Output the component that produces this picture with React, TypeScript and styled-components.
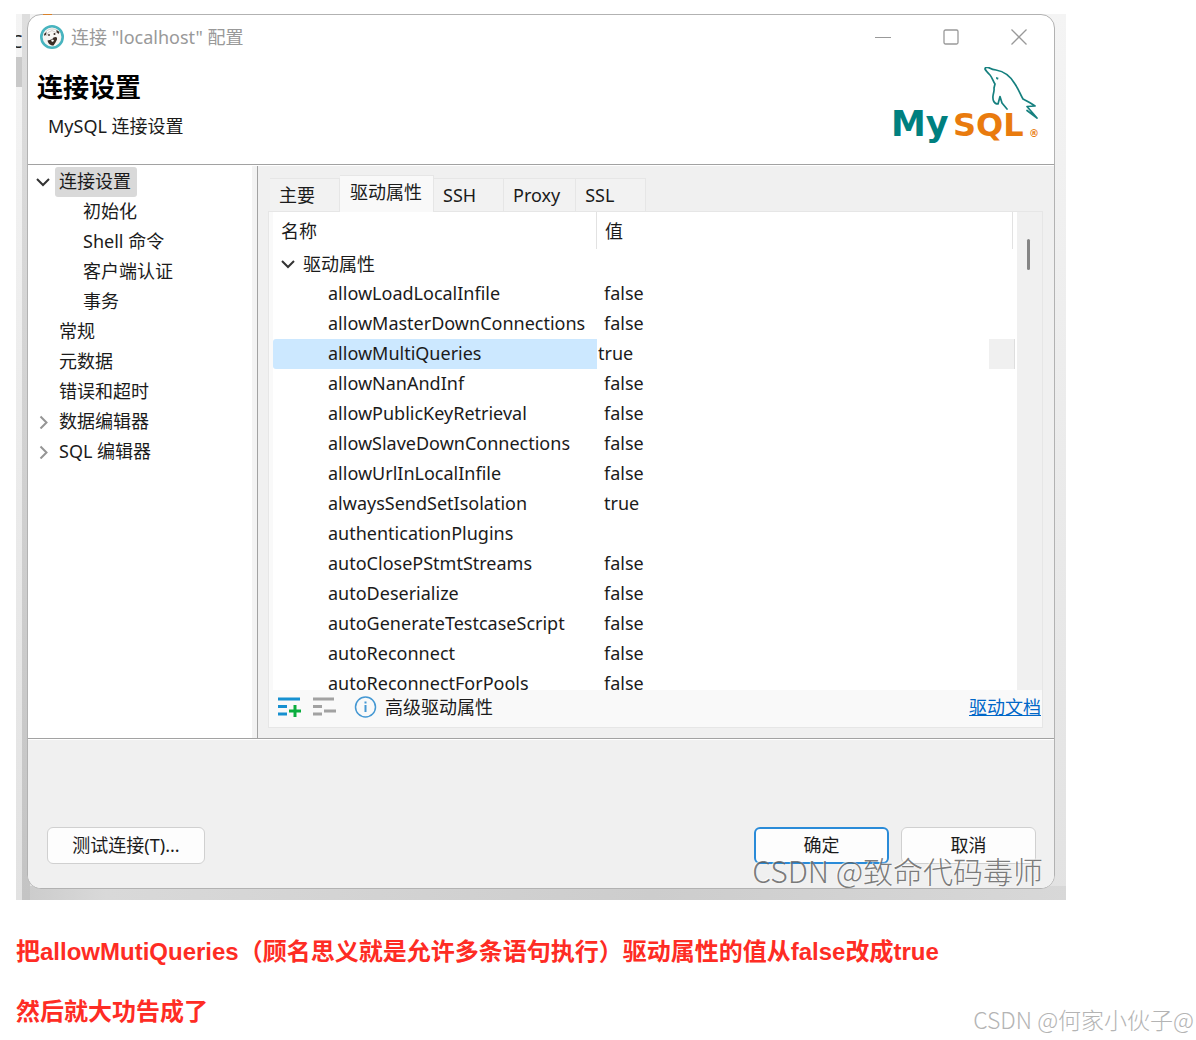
import React from 'react';
import styled, { createGlobalStyle } from 'styled-components';

const uiFont = '"Noto Sans", "Noto Sans CJK SC", sans-serif';

const GlobalStyle = createGlobalStyle`
  * { box-sizing: border-box; }
  body { margin: 0; background: #fff; }
  button, input { font: inherit; color: inherit; }
`;

const Page = styled.main`
  position: relative;
  padding: 14px 16px 0;
  min-height: 100vh;
  overflow: hidden;
`;

const Desktop = styled.figure`
  position: relative;
  margin: 0;
  max-width: 1050px;
  padding: 0 11px 11px;
  overflow: hidden;
  background:
    linear-gradient(#c9c9c9, #c9c9c9) 0 43px / 6px 30px no-repeat,
    linear-gradient(#dedede, #c4c4c4) 6px 0 / 8px 100% no-repeat,
    linear-gradient(90deg, #cbcbcb, #d9d9d9 8%, #cdcdcd 60%, #d8d8d8) 6px 100% / 100% 14px no-repeat,
    linear-gradient(#f4f4f4, #e2e2e2);
  font-family: ${uiFont};
  font-size: 18px;
  line-height: 30px;
  color: #1b1b1b;
`;

const BehindLetter = styled.span`
  position: absolute;
  left: -5px;
  top: 12px;
  width: 11px;
  overflow: hidden;
  color: #222;
`;

const BehindMark = styled.span`
  position: absolute;
  left: 27px;
  top: 0;
  width: 9px;
  height: 1px;
  background: #d9822b;
`;

const Dialog = styled.section`
  border: 1px solid #b2b2b2;
  border-radius: 14px;
  overflow: hidden;
  background: #fff;
`;

const TitleBar = styled.div`
  display: flex;
  align-items: center;
  height: 46px;
  padding: 0 19px 2px 12px;
  color: #999;
`;

const TitleText = styled.span`
  flex: 1;
  margin-left: 7px;
`;

const WindowButtons = styled.div`
  display: flex;
  gap: 36px;
`;

const WindowButton = styled.button`
  display: flex;
  align-items: center;
  justify-content: center;
  width: 32px;
  height: 32px;
  padding: 0;
  border: 0;
  background: none;
`;

const Banner = styled.header`
  display: flex;
  justify-content: space-between;
  height: 104px;
  padding: 6px 14px 0 9px;
  border-bottom: 1px solid #a2a2a2;
`;

const BannerTitle = styled.h1`
  margin: 5px 0 12px;
  font-size: 26px;
  line-height: 30px;
  font-weight: 700;
  color: #000;
`;

const BannerNote = styled.p`
  margin: 0 0 0 11px;
  line-height: 24px;
`;

const Body = styled.div`
  display: flex;
  border-top: 1px solid #fff;
  border-bottom: 1px solid #a2a2a2;
`;

const Tree = styled.nav`
  flex: 0 0 230px;
  padding: 1px 0 0 8px;
  border-right: 1px solid #a2a2a2;
  box-shadow: inset -5px 0 #f3f3f3;
`;

const TreeRow = styled.div<{ $level: number }>`
  display: flex;
  align-items: center;
  height: 30px;
  padding-left: ${(p) => p.$level * 24}px;
`;

const Twisty = styled.span`
  display: flex;
  width: 19px;
  justify-content: flex-start;
`;

const TreeLabel = styled.button<{ $active?: boolean }>`
  height: 30px;
  padding: 0 6px 2px 4px;
  border: 0;
  border-radius: 3px;
  background: ${(p) => (p.$active ? '#d9d9d9' : 'none')};
  line-height: 28px;
`;

const Content = styled.div`
  flex: 1;
  min-width: 0;
  padding: 9px 11px 10px 10px;
  background: #f0f0f0;
`;

const Tabs = styled.div`
  display: flex;
  align-items: flex-end;
  height: 36px;
  padding-left: 2px;
`;

const Tab = styled.button<{ $active?: boolean }>`
  position: relative;
  min-width: 70px;
  height: ${(p) => (p.$active ? 37 : 33)}px;
  margin-bottom: ${(p) => (p.$active ? -1 : 0)}px;
  padding: ${(p) => (p.$active ? '0 11px 4px 10px' : '0 15px 0 9px')};
  border: 1px solid #e6e6e6;
  border-width: 1px 1px 0 0;
  background: ${(p) => (p.$active ? '#f9f9f9' : '#f2f2f2')};
  text-align: left;
  line-height: 30px;
`;

const Panel = styled.div`
  border: 1px solid #e6e6e6;
  background: #f9f9f9;
`;

const Viewport = styled.div`
  display: flex;
  height: 478px;
  padding-left: 4px;
  overflow: hidden;
`;

const Sheet = styled.div`
  flex: 1;
  min-width: 0;
  padding-right: 2px;
  background: #fff;
`;

const Table = styled.table`
  width: 100%;
  table-layout: fixed;
  border-collapse: separate;
  border-spacing: 0;
`;

const HeadCell = styled.th<{ $width?: string }>`
  width: ${(p) => p.$width ?? 'auto'};
  height: 37px;
  padding: 0 8px;
  border-right: 1px solid #e2e2e2;
  text-align: left;
  font-weight: 400;
`;

const HeadFiller = styled.td`
  width: 2px;
  padding: 0;
`;

const GroupCell = styled.td`
  height: 30px;
  padding: 0;
`;

const GroupLabel = styled.div`
  display: flex;
  align-items: center;
  gap: 8px;
  padding-left: 8px;
`;

const Cell = styled.td<{ $selected?: boolean; $name?: boolean }>`
  height: 30px;
  padding: 0 0 2px ${(p) => (p.$name ? 55 : 7)}px;
  line-height: 28px;
  white-space: nowrap;
  border-radius: 3px 0 0 3px;
  background: ${(p) => (p.$selected ? '#cce8ff' : 'none')};
`;

const EditCell = styled.td`
  height: 30px;
  padding: 0;
`;

const Editor = styled.div`
  display: flex;
  height: 30px;
`;

const EditInput = styled.input`
  flex: 1;
  min-width: 0;
  padding: 0 0 3px 1px;
  border: 0;
  outline: 0;
  background: none;
`;

const EditButton = styled.button`
  width: 26px;
  padding: 0;
  border: 0;
  border-right: 1px solid #dedede;
  background: #f0f0f0;
`;

const ScrollTrack = styled.div`
  width: 25px;
  padding: 27px 0 0 10px;
  background: #f0f0f0;
`;

const ScrollThumb = styled.div`
  width: 3px;
  height: 31px;
  border-radius: 2px;
  background: #858585;
`;

const Toolbar = styled.div`
  display: flex;
  align-items: center;
  height: 37px;
  padding: 0 1px 3px 9px;
`;

const ToolButton = styled.button`
  display: flex;
  margin-right: 11px;
  padding: 0;
  border: 0;
  background: none;
`;

const ToolNote = styled.span`
  flex: 1;
  margin-left: 8px;
`;

const DocLink = styled.a`
  color: #0067c8;
  text-decoration: underline;
`;

const Footer = styled.footer`
  display: flex;
  gap: 12px;
  padding: 87px 18px 24px 19px;
  border-top: 1px solid #fff;
  background: #f0f0f0;
`;

const PushButton = styled.button<{ $wide?: boolean; $primary?: boolean }>`
  width: ${(p) => (p.$wide ? 158 : 135)}px;
  height: 37px;
  margin-right: ${(p) => (p.$wide ? 'auto' : '0')};
  padding: 0 0 2px;
  border: ${(p) => (p.$primary ? '2px solid #2a8bd8' : '1px solid #d0d0d0')};
  border-radius: 6px;
  background: #fdfdfd;
`;

const Watermark = styled.span<{ $size: number; $page?: boolean }>`
  position: absolute;
  right: ${(p) => (p.$page ? 2 : 23)}px;
  bottom: ${(p) => (p.$page ? 3 : 12)}px;
  font-family: "Noto Sans CJK SC", sans-serif;
  font-weight: 300;
  font-size: ${(p) => p.$size}px;
  line-height: 36px;
  white-space: nowrap;
  color: ${(p) => (p.$page ? '#b4b4b4' : 'rgba(90, 90, 90, 0.8)')};
  text-shadow: -1px -1px 0 rgba(255, 255, 255, 0.6);
  pointer-events: none;
`;

const Article = styled.div`
  display: grid;
  gap: 24px;
  padding-top: 34px;
  font-family: "Liberation Sans", "Noto Sans CJK SC", sans-serif;
  font-size: 24px;
  font-weight: 700;
  line-height: 36px;
  color: #fe2c24;
`;

const Paragraph = styled.p`
  margin: 0;
`;

function Chevron({ open }: { open?: boolean }) {
  return (
    <svg width="14" height="14" viewBox="0 0 14 14" fill="none" strokeWidth="2" aria-hidden="true">
      {open ? <path d="M1 4l6 6 6-6" stroke="#333" /> : <path d="M4.500 1.500l6 6-6 6" stroke="#959595" />}
    </svg>
  );
}

function BeaverIcon() {
  return (
    <svg width="24" height="24" viewBox="0 0 24 24" aria-hidden="true">
      <circle cx="12" cy="12" r="10.700" fill="#f7f5f3" stroke="#48b4bf" strokeWidth="2.600" />
      <path d="M5 9c1-3.500 4-5 7-5 3 0 5 1 7 3l-3 .5-4-2-4 2-1 3z" fill="#fff" stroke="#b9b2ac" strokeWidth=".6" />
      <path d="M4 9l2.500-2-.3 2.500-1.700 1.500zM16.500 5l3 2-1 2-2-2z" fill="#3a2c26" />
      <path d="M7.500 15.500c3-.5 5-1 6-3 2-1 4-1 3.500 2l-1.500 3-2 3c-3 0-5.500-2-6-5z" fill="#3a2c26" />
      <path d="M12 14.500l2 .5-1 2-2-1z" fill="#fff" />
      <circle cx="9" cy="10" r=".9" fill="#3a2c26" />
      <circle cx="14.500" cy="9" r="1" fill="#3a2c26" />
    </svg>
  );
}

function MySqlLogo() {
  return (
    <svg width="148" height="80" viewBox="0 0 148 80" role="img" aria-label="MySQL">
      <g fill="none" stroke="#16807f" strokeWidth="1.700" strokeLinejoin="round" strokeLinecap="round">
        <path d="M115 42l-5-6-2-6.500-2 7.500c-4 0-5.500-4-5-8 .5-4 1.500-5 1-8l1-4c-2-3-3-7-5-9-2-2-4-4-5-6 0-2 3-2 5-.8 2 1.200 3 1.500 6 1.800 9 1.500 15 7 19 14 4 6 5 10 8 15 4 2 8 4 12 7l-8 .5 10 11.500-10-7.500" />
      </g>
      <path d="M104 10l2.500.8-.5 2-1.800-.8z" fill="#16807f" />
      <g fontFamily="DejaVu Sans, sans-serif" fontWeight="700">
        <text x="-1" y="69" fill="#00807f" fontSize="35">My</text>
        <text x="61" y="69" fill="#e97b0e" fontSize="32">SQL</text>
        <text x="137" y="70" fill="#e97b0e" fontSize="10">®</text>
      </g>
    </svg>
  );
}

type Node = { label: string; level: number; twisty?: 'open' | 'closed'; active?: boolean };

const nodes: Node[] = [
  { label: '连接设置', level: 0, twisty: 'open', active: true },
  { label: '初始化', level: 1 },
  { label: 'Shell 命令', level: 1 },
  { label: '客户端认证', level: 1 },
  { label: '事务', level: 1 },
  { label: '常规', level: 0 },
  { label: '元数据', level: 0 },
  { label: '错误和超时', level: 0 },
  { label: '数据编辑器', level: 0, twisty: 'closed' },
  { label: 'SQL 编辑器', level: 0, twisty: 'closed' },
];

const tabs = ['主要', '驱动属性', 'SSH', 'Proxy', 'SSL'];

const properties: [string, string][] = [
  ['allowLoadLocalInfile', 'false'],
  ['allowMasterDownConnections', 'false'],
  ['allowMultiQueries', 'true'],
  ['allowNanAndInf', 'false'],
  ['allowPublicKeyRetrieval', 'false'],
  ['allowSlaveDownConnections', 'false'],
  ['allowUrlInLocalInfile', 'false'],
  ['alwaysSendSetIsolation', 'true'],
  ['authenticationPlugins', ''],
  ['autoClosePStmtStreams', 'false'],
  ['autoDeserialize', 'false'],
  ['autoGenerateTestcaseScript', 'false'],
  ['autoReconnect', 'false'],
  ['autoReconnectForPools', 'false'],
];

const selectedProperty = 'allowMultiQueries';

export default function App() {
  return (
    <Page>
      <GlobalStyle />
      <Desktop>
        <BehindLetter aria-hidden="true">C</BehindLetter>
        <Dialog aria-label="连接设置">
          <TitleBar>
            <BeaverIcon />
            <TitleText>连接 "localhost" 配置</TitleText>
            <WindowButtons>
              <WindowButton aria-label="最小化">
                <svg width="16" height="16" fill="none" stroke="#999"><path d="M0 8.500h16" /></svg>
              </WindowButton>
              <WindowButton aria-label="最大化">
                <svg width="16" height="16" fill="none" stroke="#999"><rect x="1" y="1" width="14" height="14" rx="1.500" strokeWidth="1.300" /></svg>
              </WindowButton>
              <WindowButton aria-label="关闭">
                <svg width="16" height="16" fill="none" stroke="#999" strokeWidth="1.300"><path d="M.5.5l15 15M15.500.5l-15 15" /></svg>
              </WindowButton>
            </WindowButtons>
          </TitleBar>
          <Banner>
            <div>
              <BannerTitle>连接设置</BannerTitle>
              <BannerNote>MySQL 连接设置</BannerNote>
            </div>
            <MySqlLogo />
          </Banner>
          <Body>
            <Tree aria-label="设置">
              {nodes.map((n) => (
                <TreeRow key={n.label} $level={n.level}>
                  <Twisty>{n.twisty && <Chevron open={n.twisty === 'open'} />}</Twisty>
                  <TreeLabel $active={n.active}>{n.label}</TreeLabel>
                </TreeRow>
              ))}
            </Tree>
            <Content>
              <Tabs role="tablist">
                {tabs.map((t) => (
                  <Tab key={t} role="tab" aria-selected={t === '驱动属性'} $active={t === '驱动属性'}>{t}</Tab>
                ))}
              </Tabs>
              <Panel>
                <Viewport>
                  <Sheet>
                    <Table>
                      <thead>
                        <tr>
                          <HeadCell $width="324px">名称</HeadCell>
                          <HeadCell>值</HeadCell>
                          <HeadFiller />
                        </tr>
                      </thead>
                      <tbody>
                        <tr>
                          <GroupCell colSpan={3}>
                            <GroupLabel><Chevron open />驱动属性</GroupLabel>
                          </GroupCell>
                        </tr>
                        {properties.map(([name, value]) => (
                          <tr key={name}>
                            <Cell $name $selected={name === selectedProperty}>{name}</Cell>
                            {name === selectedProperty ? (
                              <EditCell colSpan={2}>
                                <Editor>
                                  <EditInput aria-label={name} defaultValue={value} />
                                  <EditButton aria-label="编辑" />
                                </Editor>
                              </EditCell>
                            ) : (
                              <Cell colSpan={2}>{value}</Cell>
                            )}
                          </tr>
                        ))}
                      </tbody>
                    </Table>
                  </Sheet>
                  <ScrollTrack><ScrollThumb /></ScrollTrack>
                </Viewport>
                <Toolbar>
                  <ToolButton aria-label="添加">
                    <svg width="24" height="20" fill="none" strokeWidth="3">
                      <path d="M0 2h22M0 9.500h9M0 17h9" stroke="#1690d0" />
                      <path d="M11 14h12M17 8v12" stroke="#0aad3f" />
                    </svg>
                  </ToolButton>
                  <ToolButton aria-label="删除">
                    <svg width="24" height="20" fill="none" strokeWidth="3" stroke="#a2a2a2">
                      <path d="M0 2h21M0 9.500h9M0 17h9M11 14h12" />
                    </svg>
                  </ToolButton>
                  <svg width="29" height="22" viewBox="-7 0 29 22" fill="none" stroke="#4598d3" aria-hidden="true">
                    <circle cx="10.500" cy="11" r="10" strokeWidth="1.500" />
                    <path d="M10.500 9v7M10.500 5.500v2" strokeWidth="2" />
                  </svg>
                  <ToolNote>高级驱动属性</ToolNote>
                  <DocLink href="#docs">驱动文档</DocLink>
                </Toolbar>
              </Panel>
            </Content>
          </Body>
          <Footer>
            <PushButton $wide>测试连接(T)...</PushButton>
            <PushButton $primary>确定</PushButton>
            <PushButton>取消</PushButton>
          </Footer>
        </Dialog>
        <BehindMark />
        <Watermark $size={30}>CSDN @致命代码毒师</Watermark>
      </Desktop>
      <Article>
        <Paragraph>把allowMutiQueries（顾名思义就是允许多条语句执行）驱动属性的值从false改成true</Paragraph>
        <Paragraph>然后就大功告成了</Paragraph>
      </Article>
      <Watermark $size={23} $page>CSDN @何家小伙子@</Watermark>
    </Page>
  );
}
